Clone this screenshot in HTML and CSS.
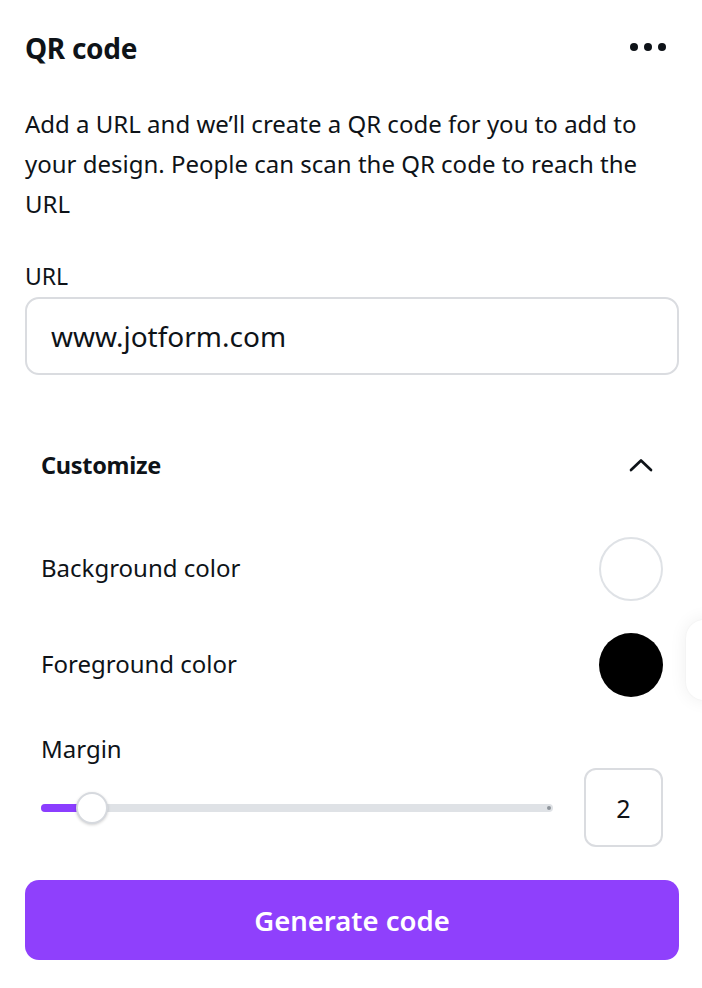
FILE: index.html
```html
<!DOCTYPE html>
<html>
<head>
<meta charset="utf-8">
<link rel="stylesheet" href="styles.css">
</head>
<body>
<div class="panel">
  <div class="header">
    <h1 class="title">QR code</h1>
    <div class="more"><span></span><span></span><span></span></div>
  </div>
  <p class="desc">Add a URL and we’ll create a QR code for you to add to your design. People can scan the QR code to reach the URL</p>
  <label class="label">URL</label>
  <div class="input">www.jotform.com</div>
  <div class="customize">
    <div class="cust-head">
      <span class="cust-title">Customize</span>
      <svg class="chev" width="24" height="14" viewBox="0 0 24 14"><path d="M2 12 L12 2.5 L22 12" fill="none" stroke="#0e1318" stroke-width="2.7" stroke-linecap="round" stroke-linejoin="round"/></svg>
    </div>
    <div class="row">
      <span class="row-label">Background color</span>
      <span class="swatch swatch-white"></span>
    </div>
    <div class="row">
      <span class="row-label">Foreground color</span>
      <span class="swatch swatch-black"></span>
    </div>
    <div class="margin-label">Margin</div>
    <div class="slider-row">
      <div class="slider">
        <div class="track"></div>
        <div class="fill"></div>
        <div class="end-dot"></div>
        <div class="thumb"></div>
      </div>
      <div class="numbox">2</div>
    </div>
  </div>
  <button class="generate">Generate code</button>
  <div class="side-card"></div>
</div>
</body>
</html>
```
FILE: styles.css
```css
html, body {
  margin: 0;
  padding: 0;
  background: #fff;
}
body {
  font-family: "Noto Sans", "Open Sans", sans-serif;
  color: #0e1318;
  overflow: hidden;
}
.panel {
  position: relative;
  width: 702px;
  height: 988px;
  box-sizing: border-box;
  padding: 0 23px 0 25px;
  overflow: hidden;
}
.header {
  display: flex;
  align-items: center;
  justify-content: space-between;
  height: 48px;
  padding-top: 24px;
}
.title {
  margin: 0;
  font-size: 28px;
  font-weight: 700;
  letter-spacing: -0.3px;
}
.more {
  display: flex;
  gap: 6px;
  margin-right: 13px;
  margin-top: -2px;
}
.more span {
  width: 8px;
  height: 8px;
  border-radius: 50%;
  background: #0e1318;
}
.desc {
  margin: 32px 0 0;
  font-size: 24px;
  line-height: 40px;
  letter-spacing: 0;
  color: #0e1318;
}
.label {
  display: block;
  margin-top: 37px;
  font-size: 23px;
  line-height: 30px;
}
.input {
  margin-top: 6px;
  height: 74px;
  border: 2px solid #dadce0;
  border-radius: 14px;
  padding: 0 24px;
  display: flex;
  align-items: center;
  font-size: 28px;
}
.customize {
  padding: 0 16px;
  margin-top: 70px;
}
.cust-head {
  display: flex;
  justify-content: space-between;
  align-items: center;
  height: 40px;
}
.cust-title {
  font-size: 23.5px;
  font-weight: 700;
  letter-spacing: -0.3px;
}
.chev {
  margin-right: 10px;
}
.row {
  display: flex;
  justify-content: space-between;
  align-items: center;
  height: 64px;
}
.row + .row {
  margin-top: 32px;
}
.cust-head + .row {
  margin-top: 52px;
}
.row-label {
  font-size: 24px;
  margin-top: -3px;
}
.swatch {
  width: 64px;
  height: 64px;
  box-sizing: border-box;
  border-radius: 50%;
}
.swatch-white {
  border: 2px solid #dfe2e6;
  background: #fff;
}
.swatch-black {
  background: #000;
}
.margin-label {
  margin-top: 37px;
  font-size: 24px;
  line-height: 30px;
}
.slider-row {
  display: flex;
  align-items: center;
  justify-content: space-between;
  margin-top: 4px;
}
.slider {
  position: relative;
  width: 512px;
  height: 40px;
}
.track {
  position: absolute;
  left: 0;
  right: 0;
  top: 16px;
  height: 8px;
  border-radius: 4px;
  background: #dfe2e6;
}
.fill {
  position: absolute;
  left: 0;
  top: 16px;
  width: 56px;
  height: 8px;
  border-radius: 4px;
  background: #8b3dff;
}
.end-dot {
  position: absolute;
  right: 2px;
  top: 18px;
  width: 4px;
  height: 4px;
  border-radius: 50%;
  background: #8e949b;
}
.thumb {
  position: absolute;
  left: 35px;
  top: 4px;
  width: 32px;
  height: 32px;
  box-sizing: border-box;
  border-radius: 50%;
  background: #fff;
  border: 2px solid #d6d9de;
  box-shadow: 0 1px 3px rgba(0,0,0,0.18);
}
.numbox {
  width: 79px;
  height: 79px;
  box-sizing: border-box;
  border: 2px solid #dadce0;
  border-radius: 12px;
  display: flex;
  align-items: center;
  justify-content: center;
  font-size: 25px;
}
.generate {
  display: block;
  width: 100%;
  margin-top: 33px;
  height: 80px;
  border: none;
  border-radius: 14px;
  background: #8f40fc;
  color: #fff;
  font-family: "Noto Sans", "Open Sans", sans-serif;
  font-size: 27.5px;
  font-weight: 600;
}
.side-card {
  position: absolute;
  left: 686px;
  top: 620px;
  width: 80px;
  height: 80px;
  border-radius: 18px;
  background: #fff;
  box-shadow: 0 0 18px rgba(0,0,0,0.07), 0 0 2px rgba(0,0,0,0.05);
}
```
